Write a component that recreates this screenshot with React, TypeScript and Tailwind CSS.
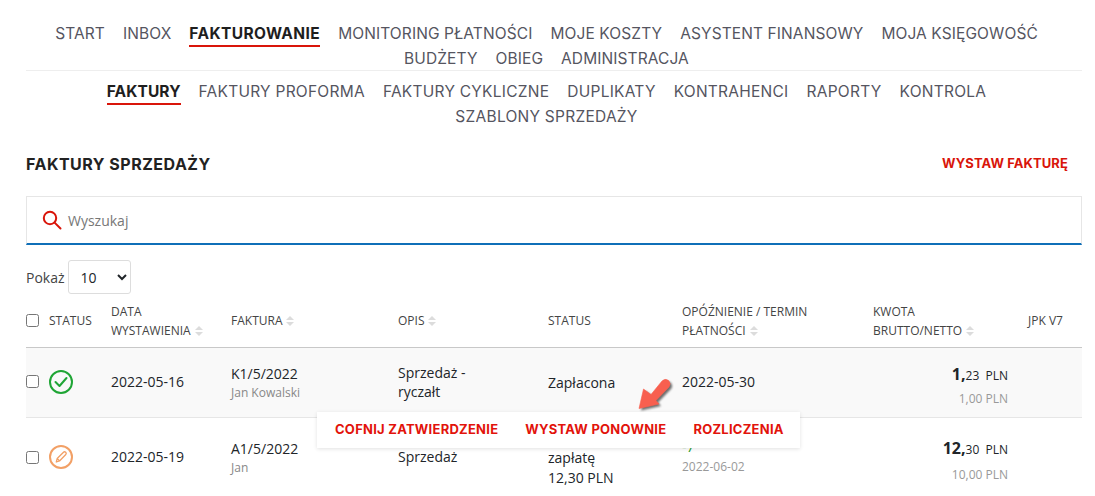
import React from "react";

const navFont = "font-['Inter',sans-serif] text-[15.5px] leading-[23px] tracking-[0.1px]";
const subNavFont = "font-['Inter',sans-serif] text-[15.5px] leading-[23px] tracking-[0.25px]";

function NavItem({ label, active, tight }: { label: string; active?: boolean; tight?: boolean }) {
  return (
    <a className={active ? `block border-b-2 border-[#d9150a] font-bold ${tight ? "tracking-[0.1px]" : "tracking-[0.4px]"} text-[#1e1e1e]` : "block border-b-2 border-transparent text-[#55555f]"}>
      {label}
    </a>
  );
}

function Sort() {
  return (
    <svg className="ml-1 inline-block align-[-1px]" width="8" height="10" viewBox="0 0 8 10" fill="#dcdcdc">
      <path d="M4 0 8 4H0ZM4 10 0 6H8Z" />
    </svg>
  );
}

function Arrow() {
  const d = "M9 38.5 13.5 19 21 24.5 32 11Q35 8 38.5 10.5 41.5 13.5 39 17L26 30.5 29 34Z";
  return (
    <svg className="absolute left-[630px] top-[370px]" width="50" height="50" viewBox="0 0 50 50">
      <path d={d} fill="#222222" opacity=".65" transform="translate(2 2)" style={{ filter: "blur(1.2px)" }} />
      <path d={d} fill="#f85f4f" stroke="#f85f4f" strokeWidth=".6" strokeLinejoin="round" />
    </svg>
  );
}

const cols = "grid grid-cols-[23px_62px_120px_167px_150px_134px_191px_154px_55px] items-center";

export default function App() {
  return (
    <div className="relative h-[496px] w-[1095px] overflow-hidden bg-white pl-[26px] pr-[13px] font-['Open_Sans',sans-serif] text-[14px] text-[#212529]">
      <div className="h-[71px] border-b border-[#eeeeee] pt-[22px] pr-[15px]">
        <nav className={`flex flex-wrap content-start justify-center gap-x-[18px] ${navFont}`}>
          {["START", "INBOX"].map((l) => <NavItem key={l} label={l} />)}
          <NavItem label="FAKTUROWANIE" active />
          {["MONITORING PŁATNOŚCI", "MOJE KOSZTY", "ASYSTENT FINANSOWY", "MOJA KSIĘGOWOŚĆ", "BUDŻETY", "OBIEG", "ADMINISTRACJA"].map((l) => <NavItem key={l} label={l} />)}
        </nav>
      </div>
      <div className="h-[71px] pt-[9px] pr-[15px]">
        <nav className={`flex flex-wrap content-start justify-center gap-x-[18px] ${subNavFont}`}>
          <NavItem label="FAKTURY" active tight />
          {["FAKTURY PROFORMA", "FAKTURY CYKLICZNE", "DUPLIKATY", "KONTRAHENCI", "RAPORTY", "KONTROLA", "SZABLONY SPRZEDAŻY"].map((l) => <NavItem key={l} label={l} />)}
        </nav>
      </div>

      <div className="mt-[12px] flex h-[20px] items-center justify-between pr-[14px] font-['Inter',sans-serif]">
        <h1 className="text-[16px] font-bold tracking-[0.5px] text-[#222222]">FAKTURY SPRZEDAŻY</h1>
        <a className="text-[13px] font-bold tracking-[0.1px] text-[#d9150a]">WYSTAW FAKTURĘ</a>
      </div>

      <div className="mt-[22px] flex h-[49px] items-center border border-b-2 border-[#e6e6e6] border-b-[#0f6fb8] pl-[15px]">
        <svg width="20" height="20" viewBox="0 0 20 20" fill="none" stroke="#d9150a" strokeWidth="2">
          <circle cx="8" cy="8" r="6.2" />
          <path d="M12.6 12.6 18.5 18.5" strokeLinecap="round" />
        </svg>
        <span className="ml-[6px] text-[14px] text-[#777777]">Wyszukaj</span>
      </div>

      <div className="mt-[15px] flex items-center gap-[3px]">
        <span className="text-[#444444]">Pokaż</span>
        <select className="h-[34px] w-[63px] rounded-[3px] border border-[#dddddd] bg-white pl-[8px] text-[14px]">
          <option>10</option>
        </select>
      </div>

      <div className={`${cols} h-[54px] border-b border-[#c8c8c8] text-[12px] leading-[19px] text-[#444444]`}>
        <input type="checkbox" className="m-0 h-[13px] w-[13px]" />
        <div>STATUS</div>
        <div>DATA<br />WYSTAWIENIA<Sort /></div>
        <div>FAKTURA<Sort /></div>
        <div>OPIS<Sort /></div>
        <div>STATUS</div>
        <div>OPÓŹNIENIE / TERMIN<br />PŁATNOŚCI<Sort /></div>
        <div>KWOTA<br />BRUTTO/NETTO<Sort /></div>
        <div className="pl-[1px]">JPK V7</div>
      </div>

      <div className={`${cols} h-[70px] border-b border-[#e6e6e6] bg-[#f9f9f9] pb-[1px] leading-[19px]`}>
        <input type="checkbox" className="m-0 mb-[1px] h-[13px] w-[13px]" />
        <svg width="24" height="24" viewBox="0 0 24 24" fill="none" stroke="#1fa535" strokeWidth="2">
          <circle cx="12" cy="12" r="11" />
          <path d="M6.5 12 10.5 16 17.5 8" strokeLinecap="round" strokeLinejoin="round" />
        </svg>
        <div className="mb-[2px]">2022-05-16</div>
        <div className="pt-[2px]">
          <div>K1/5/2022</div>
          <div className="text-[12px] text-[#888888]">Jan Kowalski</div>
        </div>
        <div>Sprzedaż -<br />ryczałt</div>
        <div>Zapłacona</div>
        <div className="mb-[2px]">2022-05-30</div>
        <div className="pr-[19px] pt-[9px] text-right">
          <div className="text-[12px] leading-[20px]"><b className="text-[16px] font-bold">1,</b>23 &nbsp;PLN</div>
          <div className="mt-[3px] text-[12px] leading-[20px] text-[#999999]">1,00 PLN</div>
        </div>
        <div />
      </div>

      <div className={`${cols} h-[78px] leading-[20px]`}>
        <input type="checkbox" className="m-0 h-[13px] w-[13px]" />
        <svg width="24" height="24" viewBox="0 0 24 24" fill="none" stroke="#f2a066" strokeWidth="2">
          <circle cx="12" cy="12" r="11" />
          <path d="M7.3 17 8.2 13.5 14.5 7.2Q15.5 6.2 16.7 7.3 17.8 8.5 16.8 9.5L10.5 16ZM8.2 13.5 10.5 16" strokeLinejoin="round" strokeWidth="1.3" />
        </svg>
        <div>2022-05-19</div>
        <div className="pt-[2px] leading-[19px]">
          <div>A1/5/2022</div>
          <div className="text-[12px] text-[#888888]">Jan</div>
        </div>
        <div>Sprzedaż</div>
        <div className="pt-[1px]">&nbsp;<br />zapłatę<br />12,30 PLN</div>
        <div>
          <div className="text-[#2ca02c]">-7</div>
          <div className="text-[12px] text-[#999999]">2022-06-02</div>
        </div>
        <div className="pr-[19px] pt-[8px] text-right">
          <div className="text-[12px] leading-[20px]"><b className="text-[16px] font-bold">12,</b>30 &nbsp;PLN</div>
          <div className="mt-[5px] text-[12px] leading-[20px] text-[#999999]">10,00 PLN</div>
        </div>
        <div />
      </div>

      <div className="absolute left-[317px] top-[412px] flex h-[36px] w-[483px] items-center gap-[27px] bg-white pl-[18px] font-['Inter',sans-serif] text-[13px] font-bold tracking-[0.25px] text-[#e2130b] shadow-[0_1px_4px_rgba(0,0,0,0.12)]">
        <span>COFNIJ ZATWIERDZENIE</span>
        <span>WYSTAW PONOWNIE</span>
        <span>ROZLICZENIA</span>
      </div>
      <Arrow />
    </div>
  );
}
